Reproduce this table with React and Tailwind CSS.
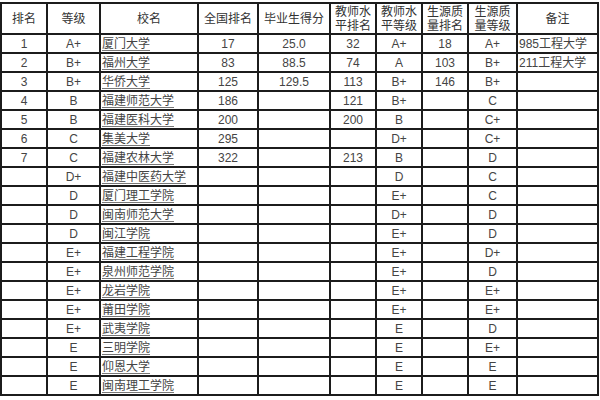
import React from "react";

const headers = [
  ["排名"],
  ["等级"],
  ["校名"],
  ["全国排名"],
  ["毕业生得分"],
  ["教师水", "平排名"],
  ["教师水", "平等级"],
  ["生源质", "量排名"],
  ["生源质", "量等级"],
  ["备注"],
];

const rows = [
  ["1", "A+", "厦门大学", "17", "25.0", "32", "A+", "18", "A+", "985工程大学"],
  ["2", "B+", "福州大学", "83", "88.5", "74", "A", "103", "B+", "211工程大学"],
  ["3", "B+", "华侨大学", "125", "129.5", "113", "B+", "146", "B+", ""],
  ["4", "B", "福建师范大学", "186", "", "121", "B+", "", "C", ""],
  ["5", "B", "福建医科大学", "200", "", "200", "B", "", "C+", ""],
  ["6", "C", "集美大学", "295", "", "", "D+", "", "C+", ""],
  ["7", "C", "福建农林大学", "322", "", "213", "B", "", "D", ""],
  ["", "D+", "福建中医药大学", "", "", "", "D", "", "C", ""],
  ["", "D", "厦门理工学院", "", "", "", "E+", "", "C", ""],
  ["", "D", "闽南师范大学", "", "", "", "D+", "", "D", ""],
  ["", "D", "闽江学院", "", "", "", "E+", "", "D", ""],
  ["", "E+", "福建工程学院", "", "", "", "E+", "", "D+", ""],
  ["", "E+", "泉州师范学院", "", "", "", "E+", "", "D", ""],
  ["", "E+", "龙岩学院", "", "", "", "E+", "", "E+", ""],
  ["", "E+", "莆田学院", "", "", "", "E+", "", "E+", ""],
  ["", "E+", "武夷学院", "", "", "", "E", "", "D", ""],
  ["", "E", "三明学院", "", "", "", "E", "", "E+", ""],
  ["", "E", "仰恩大学", "", "", "", "E", "", "E", ""],
  ["", "E", "闽南理工学院", "", "", "", "E", "", "E", ""],
];

export default function App() {
  return (
    <div className="w-[600px] h-[400px] bg-white overflow-hidden pt-[2px]">
      <div
        className="grid w-[599px] bg-[#1c1c1c] p-[2px] gap-[2px] text-[12px] text-[#444] [font-family:'Liberation_Sans','Noto_Sans_CJK_SC',sans-serif]"
        style={{
          gridTemplateColumns: "44px 51px 96px 58px 70px 44px 44px 44px 47px 79px",
          gridTemplateRows: "29px repeat(19, 17px)",
        }}
      >
        {headers.map((h, i) => (
          <div
            key={"h" + i}
            className="bg-white flex flex-col items-center justify-center leading-[14px] text-[#333]"
          >
            {h.map((l, j) => (
              <span key={j}>{l}</span>
            ))}
          </div>
        ))}
        {rows.map((r, ri) =>
          r.map((c, ci) => (
            <div
              key={ri + "-" + ci}
              className={
                "bg-white flex items-center leading-none whitespace-nowrap overflow-hidden " +
                (ci === 2
                  ? "justify-start pl-[1px] underline decoration-[#777] underline-offset-[2px]"
                  : ci === 9
                  ? "justify-start pl-[1px]"
                  : "justify-center")
              }
            >
              {c}
            </div>
          ))
        )}
      </div>
    </div>
  );
}
